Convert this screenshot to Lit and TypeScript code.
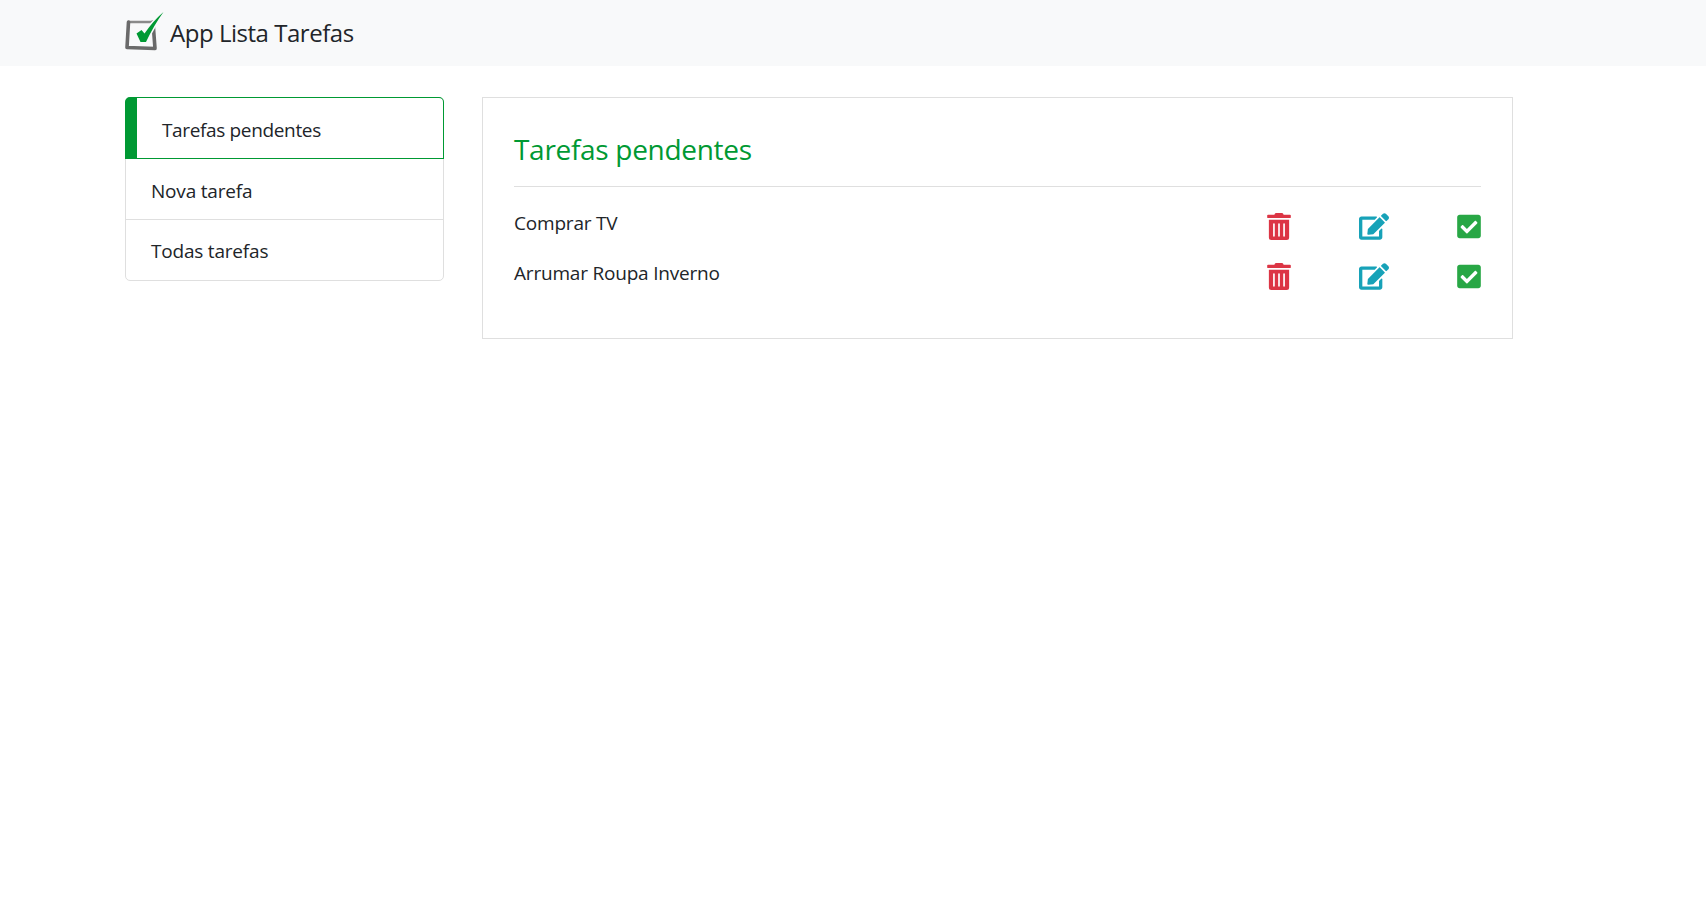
import { LitElement, html, css, svg } from "lit";
import { customElement } from "lit/decorators.js";

const trash = svg`<path d="M32 464a48 48 0 0 0 48 48h288a48 48 0 0 0 48-48V128H32zm272-256a16 16 0 0 1 32 0v224a16 16 0 0 1-32 0zm-96 0a16 16 0 0 1 32 0v224a16 16 0 0 1-32 0zm-96 0a16 16 0 0 1 32 0v224a16 16 0 0 1-32 0zM432 32H312l-9.4-18.7A24 24 0 0 0 281.1 0H166.8a23.72 23.72 0 0 0-21.4 13.3L136 32H16A16 16 0 0 0 0 48v32a16 16 0 0 0 16 16h416a16 16 0 0 0 16-16V48a16 16 0 0 0-16-16z"/>`;
const edit = svg`<path d="M402.6 83.2l90.2 90.2c3.8 3.8 3.8 10 0 13.8L274.4 405.6l-92.8 10.3c-12.4 1.4-22.9-9.1-21.5-21.5l10.3-92.8L388.8 83.2c3.8-3.8 10-3.8 13.8 0zm162-22.9l-48.8-48.8c-15.2-15.2-39.9-15.2-55.2 0l-35.4 35.4c-3.8 3.8-3.8 10 0 13.8l90.2 90.2c3.8 3.8 10 3.8 13.8 0l35.4-35.4c15.2-15.3 15.2-40 0-55.2zM384 346.2V448H64V128h229.8c3.2 0 6.2-1.3 8.5-3.5l40-40c7.6-7.6 2.2-20.5-8.5-20.5H48C21.5 64 0 85.5 0 112v352c0 26.5 21.5 48 48 48h352c26.5 0 48-21.5 48-48V306.2c0-10.7-12.9-16-20.5-8.5l-40 40c-2.2 2.3-3.5 5.3-3.5 8.5z"/>`;
const check = svg`<path d="M400 480H48c-26.51 0-48-21.49-48-48V80c0-26.51 21.49-48 48-48h352c26.51 0 48 21.49 48 48v352c0 26.51-21.49 48-48 48zm-204.686-98.059l184-184c6.248-6.248 6.248-16.379 0-22.627l-22.627-22.627c-6.248-6.248-16.379-6.249-22.628 0L184 302.745l-70.059-70.059c-6.248-6.248-16.379-6.248-22.628 0l-22.627 22.627c-6.248 6.248-6.248 16.379 0 22.627l104 104c6.249 6.25 16.379 6.25 22.628.001z"/>`;

@customElement("app-root")
export class AppRoot extends LitElement {
  static styles = css`
    :host { display: block; min-height: 905px; background: #fff; color: #212529;
      font-family: "Open Sans", "Noto Sans", sans-serif; font-size: 19px; letter-spacing: -0.2px; }
    * { box-sizing: border-box; }
    .nav { height: 66px; background: #f8f9fa; padding: 10px 0 0 125px; display: flex; align-items: flex-start; }
    .logo { width: 40px; height: 42px; margin-right: 5px; flex: none; }
    .brand { font-size: 24px; line-height: 36px; padding-top: 5px; letter-spacing: -0.47px; }
    .layout { display: flex; align-items: flex-start; padding: 31px 0 0 125px; gap: 38px; }
    .side { width: 319px; flex: none; border: 1px solid #dfdfdf; border-radius: 5px; }
    .item { display: block; height: 61px; line-height: 58px; padding: 3px 0 0 25px; border-bottom: 1px solid #dfdfdf; }
    .item:last-child { height: 60px; padding-top: 2px; border-bottom: none; }
    .item.active { height: 62px; margin: -1px -1px 0; padding: 2px 0 0 25px; line-height: 60px; letter-spacing: -0.35px;
      border: 1px solid #009933; border-left: 12px solid #009933; border-radius: 5px 5px 0 0; }
    .main { width: 1031px; flex: none; height: 242px; border: 1px solid #dfdfdf; padding: 31px; }
    h4 { margin: 0; font-weight: 400; font-size: 28px; line-height: 40px; color: #009933; letter-spacing: -0.3px; }
    hr { margin: 17px 0 0; border: none; border-top: 1px solid #dfdfdf; }
    .rows { padding-top: 13px; }
    .row { display: flex; height: 50px; }
    .label { flex: 1; line-height: 46px; }
    .icon { height: 27px; display: block; margin-top: 13px; }
    .i1 { width: 24px; fill: #dc3545; margin-right: 68.5px; }
    .i2 { width: 30px; fill: #17a2b8; margin-right: 68px; }
    .i3 { width: 24px; fill: #28a745; }
  `;
  render() {
    return html`
      <div class="nav">
        <svg class="logo" viewBox="0 0 40 42">
          <path d="M3.5 12 L28 12" fill="none" stroke="#8a8a8a" stroke-width="2.6" stroke-linecap="round"/>
          <path d="M28 12 L30 38.5 L2 37.5 L3.5 12" fill="none" stroke="#6a6a6a" stroke-width="3.6" stroke-linejoin="round" stroke-linecap="round"/>
          <path d="M11.5 23.5 L16.5 20 L19.5 23.5 Q28 11 38.5 2 Q29 15 21 32 L15.5 32 Z" fill="#f8f9fa" stroke="#f8f9fa" stroke-width="3"/>
          <path d="M11.5 23.5 L16.5 20 L19.5 23.5 Q28 11 38.5 2 Q29 15 21 32 L15.5 32 Z" fill="#009933"/>
        </svg>
        <span class="brand">App Lista Tarefas</span>
      </div>
      <div class="layout">
        <div class="side">
          <a class="item active">Tarefas pendentes</a>
          <a class="item">Nova tarefa</a>
          <a class="item">Todas tarefas</a>
        </div>
        <div class="main">
          <h4>Tarefas pendentes</h4>
          <hr />
          <div class="rows">
            ${["Comprar TV", "Arrumar Roupa Inverno"].map((t) => html`
              <div class="row">
                <div class="label">${t}</div>
                <svg class="icon i1" viewBox="0 0 448 512">${trash}</svg>
                <svg class="icon i2" viewBox="0 0 576 512">${edit}</svg>
                <svg class="icon i3" viewBox="0 0 448 512">${check}</svg>
              </div>`)}
          </div>
        </div>
      </div>`;
  }
}
